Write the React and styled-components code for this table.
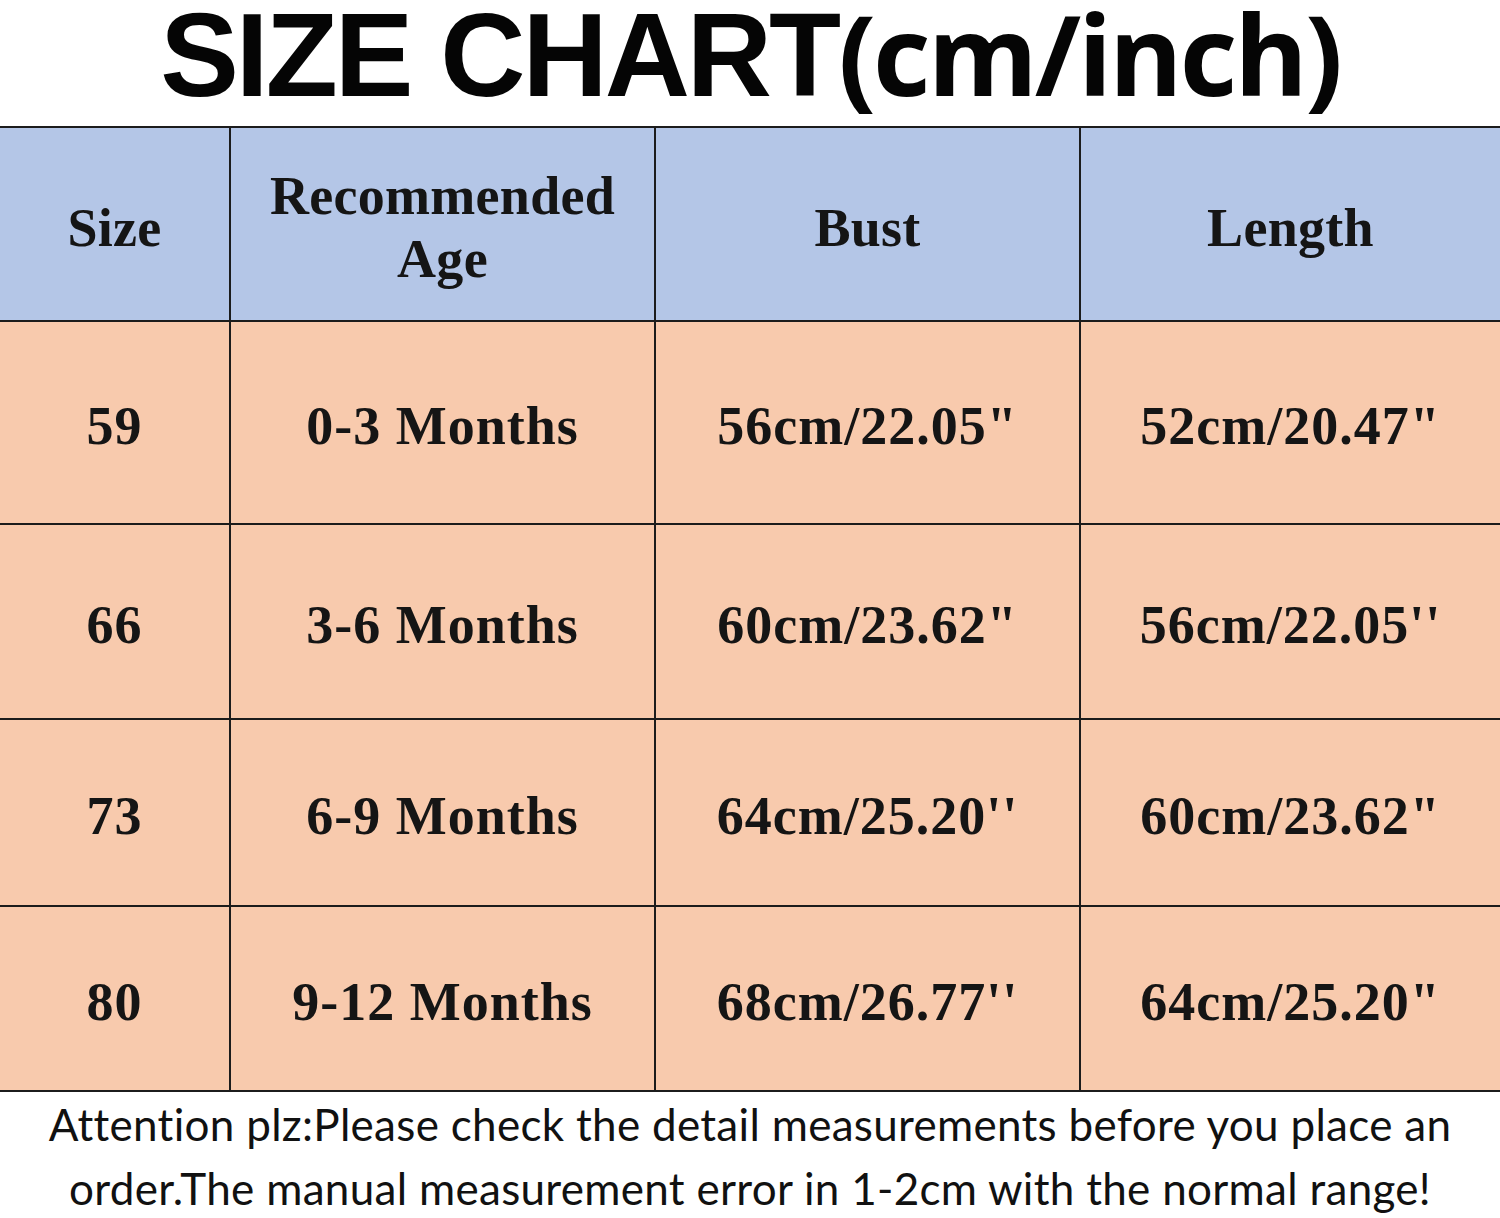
import React from 'react'
import styled, { createGlobalStyle } from 'styled-components'

const GlobalStyle = createGlobalStyle`
  html, body {
    margin: 0;
    padding: 0;
    background: #ffffff;
  }
`

const rows = [
  { size: '59', age: '0-3 Months', bust: '56cm/22.05"', length: '52cm/20.47"' },
  { size: '66', age: '3-6 Months', bust: '60cm/23.62"', length: "56cm/22.05''" },
  { size: '73', age: '6-9 Months', bust: "64cm/25.20''", length: '60cm/23.62"' },
  { size: '80', age: '9-12 Months', bust: "68cm/26.77''", length: '64cm/25.20"' },
]

const App = () => {
  return (
    <Page>
      <GlobalStyle />
      <Title>
        <TitleMain>SIZE CHART</TitleMain>
        <TitleUnit>(cm/inch)</TitleUnit>
      </Title>
      <Chart>
        <HeadCell>Size</HeadCell>
        <HeadCell>Recommended<br />Age</HeadCell>
        <HeadCell>Bust</HeadCell>
        <HeadCell>Length</HeadCell>
        {rows.map((r) => (
          <React.Fragment key={r.size}>
            <Cell>{r.size}</Cell>
            <Cell>{r.age}</Cell>
            <Cell>{r.bust}</Cell>
            <Cell>{r.length}</Cell>
          </React.Fragment>
        ))}
      </Chart>
      <Note>
        Attention plz:Please check the detail measurements before you place an<br />
        order.The manual measurement error in 1-2cm with the normal range!
      </Note>
    </Page>
  )
}

const Page = styled.div`
  width: 1500px;
  height: 1218px;
  overflow: hidden;
  display: flex;
  flex-direction: column;
`

const Title = styled.h1`
  margin: 0;
  height: 126px;
  flex-shrink: 0;
  text-align: center;
  white-space: nowrap;
  color: #050505;
  font-family: "Liberation Sans", Arial, sans-serif;
  font-size: 118px;
  line-height: 106px;
`

const TitleMain = styled.span`
  font-family: "Liberation Sans", Arial, sans-serif;
  font-weight: 900;
  font-size: 118px;
  letter-spacing: -3px;
`

const TitleUnit = styled.span`
  font-family: "Open Sans", "Noto Sans", sans-serif;
  font-weight: 700;
  font-size: 112px;
  letter-spacing: -3px;
`

const Chart = styled.div`
  display: grid;
  grid-template-columns: 229px 423px 423px 1fr;
  grid-template-rows: 192px 201px 193px 185px 183px;
  gap: 2px;
  background: #1c1c1c;
  border-top: 2px solid #1c1c1c;
  border-bottom: 2px solid #1c1c1c;
`

const Cell = styled.div`
  background: #f8caad;
  display: flex;
  align-items: center;
  justify-content: center;
  text-align: center;
  padding-top: 8px;
  font-family: "Liberation Serif", "Times New Roman", serif;
  font-weight: 700;
  font-size: 54px;
  letter-spacing: 1px;
  line-height: 63px;
  color: #151515;
`

const HeadCell = styled(Cell)`
  background: #b4c6e7;
  letter-spacing: 0.3px;
`

const Note = styled.p`
  margin: 0;
  text-align: center;
  font-family: Lato, "Open Sans", sans-serif;
  font-variant-ligatures: none;
  font-size: 44px;
  letter-spacing: 0.3px;
  line-height: 64px;
  color: #111111;
`

export default App
